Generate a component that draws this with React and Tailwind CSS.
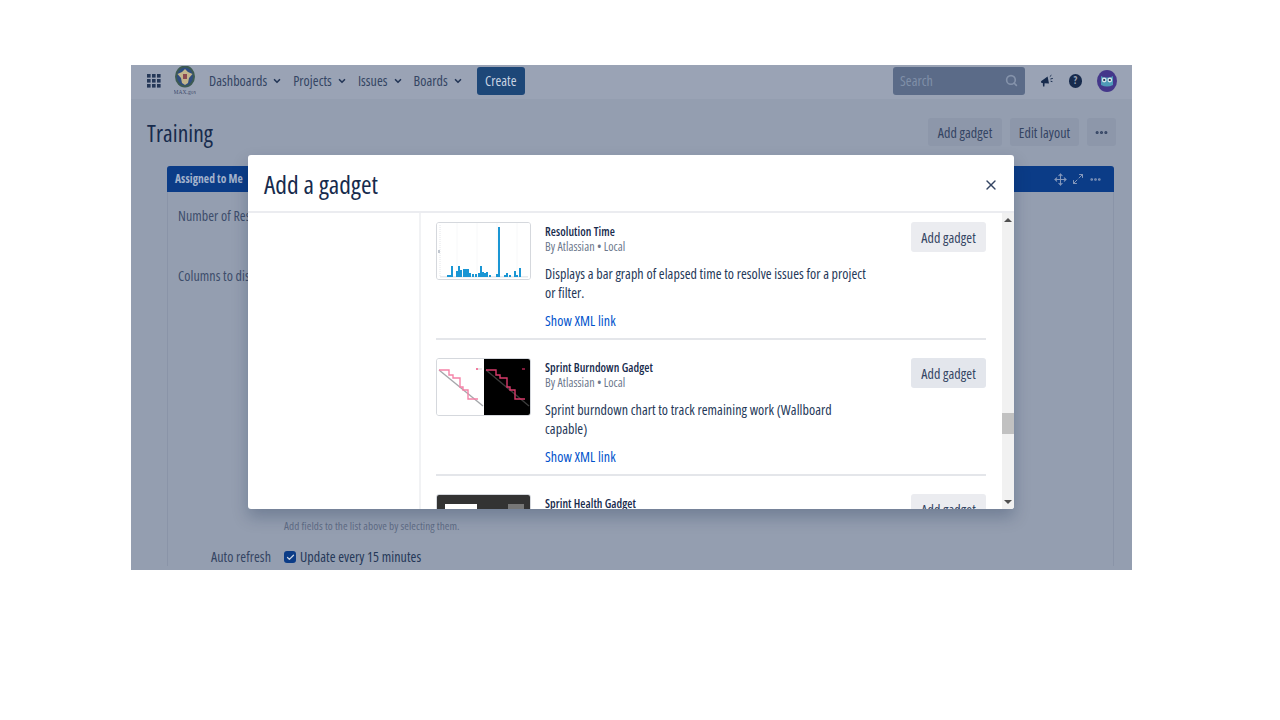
import React from 'react';
import { ChevronDown, Search, X, Move, Maximize2, MoreHorizontal, Check } from 'lucide-react';

const font = "font-['Open_Sans','Liberation_Sans',sans-serif] [font-stretch:77%] tracking-[0.06px]";

const GridIcon = () => (
  <svg width="14" height="14" viewBox="0 0 14 14" fill="#253858">
    {[0, 5, 10].map((y) =>
      [0, 5, 10].map((x) => <rect key={`${x}-${y}`} x={x} y={y} width="3.6" height="3.6" />)
    )}
  </svg>
);

const Seal = () => (
  <svg width="22" height="30" viewBox="0 0 22 30">
    <ellipse cx="11" cy="10.5" rx="10" ry="11" fill="#3d5a52" />
    <ellipse cx="11" cy="10.5" rx="8" ry="9" fill="#2f4d80" />
    <path d="M3.5 8 L8 6 L11 3 L14 6 L18.5 8 L15 12 L14 17 L11 19 L8 17 L7 12 Z" fill="#c3b58c" />
    <rect x="9" y="8" width="4" height="5" fill="#8c4a52" />
    <text x="11" y="28" textAnchor="middle" fontSize="5.5" fill="#3f4d6b" fontFamily="Liberation Serif, serif">MAX.gov</text>
  </svg>
);

const Megaphone = () => (
  <svg width="14" height="14" viewBox="0 0 14 14" fill="#172b4d">
    <path d="M1 7.2 L7.6 2.6 L9 9.6 L4.6 9.2 L4.4 12.6 L3 12.6 L2.8 9 L1.4 9 Z" />
    <path d="M9.8 2.6 L11.4 1.2 M10.4 5 L12.8 4.4 M10.6 7.2 L12.4 7.6" stroke="#172b4d" strokeWidth="1" />
  </svg>
);

const Owl = () => (
  <svg width="20" height="22" viewBox="0 0 20 22">
    <ellipse cx="10" cy="11" rx="10" ry="11" fill="#44378a" />
    <path d="M4 6 L7 7.5 H13 L16 6 V15 Q10 18 4 15 Z" fill="#4f9bb8" />
    <circle cx="7.2" cy="10" r="2.4" fill="#d5e3ea" />
    <circle cx="12.8" cy="10" r="2.4" fill="#d5e3ea" />
    <circle cx="7.2" cy="10" r="1.1" fill="#172b4d" />
    <circle cx="12.8" cy="10" r="1.1" fill="#172b4d" />
  </svg>
);

const NavItem = ({ label }) => (
  <div className="flex items-center gap-[5px] text-[14px] text-[#344563] whitespace-nowrap">
    {label}
    <ChevronDown size={10} strokeWidth={4} className="text-[#253858]" />
  </div>
);

const GreyButton = ({ children, className = '' }) => (
  <div className={`h-[28px] flex items-center justify-center rounded-[3px] bg-[#8d97aa] text-[14px] text-[#344463] whitespace-nowrap ${className}`}>
    {children}
  </div>
);

const ResolutionThumb = () => {
  const bars = [
    [10, 2], [12, 2], [14, 11], [19, 6], [21, 11], [23, 7], [26, 8], [28, 8], [30, 8], [32, 4], [35, 3], [38, 3],
    [41, 4], [43, 11], [45, 5], [47, 4], [49, 5], [52, 2], [59, 3], [61, 50], [67, 2], [69, 4], [72, 2], [77, 6], [79, 2], [82, 9],
  ];
  return (
    <svg width="93" height="56" viewBox="0 0 93 56" className="block">
      <rect width="93" height="56" fill="#fff" />
      <g stroke="#f7f8f9" strokeWidth="1">
        <path d="M20 0 V54 M40 0 V54 M60 0 V54 M80 0 V54" />
        <path d="M3 2 V54" strokeDasharray="1 1" stroke="#e4e6ea" />
      </g>
      <rect x="1" y="27" width="2" height="3" fill="#c1c7d0" />
      <rect x="3" y="53" width="88" height="1.5" fill="#e6e9ed" />
      {bars.map(([x, h]) => (
        <rect key={x} x={x} y={54 - h} width="2" height={h} fill="#1a96d4" />
      ))}
    </svg>
  );
};

const burndownPath = 'M2 11 H12 V16 H16 V19 H23 V28 H26 V31 H31 V40 H41';

const BurndownThumb = () => (
  <svg width="93" height="56" viewBox="0 0 93 56" className="block">
    <rect width="47" height="56" fill="#fff" />
    <rect x="47" width="46" height="56" fill="#000" />
    <path d="M2 11 L46 47" stroke="#a5a7ab" strokeWidth="1.4" />
    <path d={burndownPath} fill="none" stroke="#f583a8" strokeWidth="1.4" />
    <rect x="39" y="9" width="2" height="2" fill="#f27ca0" />
    <rect x="41" y="9.5" width="4" height="1" fill="#d0d0d0" />
    <path d="M49 11 L92 47" stroke="#3c3c3c" strokeWidth="1.4" />
    <path d={burndownPath} transform="translate(47 0)" fill="none" stroke="#d83b6b" strokeWidth="1.4" />
    <rect x="85" y="9" width="3" height="2" fill="#7c1a3a" />
  </svg>
);

const HealthThumb = () => (
  <svg width="93" height="56" viewBox="0 0 93 56" className="block">
    <rect width="93" height="56" fill="#333" />
    <rect x="8" y="9" width="32" height="12" fill="#fff" />
    <rect x="71" y="9" width="16" height="12" fill="#777" />
  </svg>
);

const Gadget = ({ name, desc, thumb, hover }) => (
  <div className={`flex pt-[9px] ${desc ? 'h-[127px] mb-[9px] border-b-2 border-[#e4e6ea]' : 'h-[60px]'}`}>
    <div className="w-[95px] h-[58px] shrink-0 rounded-[3px] border border-[#d5d8dd] overflow-hidden">{thumb}</div>
    <div className="ml-[14px] w-[340px]">
      <div className="text-[11.8px] font-semibold leading-[19px] text-[#172b4d]">{name}</div>
      {desc && (
        <>
          <div className="text-[12px] leading-[16px] mt-[-2px] text-[#6b778c]">By Atlassian • Local</div>
          <div className="mt-[9px] text-[14px] leading-[19px] text-[#253858]">{desc}</div>
          <div className="mt-[9px] text-[14px] leading-[19px] text-[#0052cc]">Show XML link</div>
        </>
      )}
    </div>
    <div className={`ml-auto h-[30px] w-[75px] flex items-center justify-center rounded-[3px] text-[14px] text-[#344563] whitespace-nowrap ${hover ? 'bg-[#e3e6ec]' : 'bg-[#ebecf0]'}`}>
      Add gadget
    </div>
  </div>
);

export default function App() {
  return (
    <div className={`${font} h-screen w-full bg-white pt-[65px] pl-[131px] overflow-hidden`}>
      <div className="relative w-[1001px] h-[505px] overflow-hidden bg-[#949eb0]">
        {/* top nav */}
        <div className="h-[34px] flex items-center bg-[#9aa3b5] pl-[16px] pr-[15px] pb-[3px]">
          <GridIcon />
          <div className="ml-[13px]"><Seal /></div>
          <div className="ml-[13px] flex items-center gap-[11px]">
            <NavItem label="Dashboards" />
            <NavItem label="Projects" />
            <NavItem label="Issues" />
            <NavItem label="Boards" />
          </div>
          <div className="ml-[14px] h-[28px] w-[48px] flex items-center justify-center rounded-[3px] bg-[#1d4778] text-[14px] text-[#c9d3e2]">
            Create
          </div>
          <div className="ml-auto h-[28px] w-[132px] flex items-center justify-between px-[7px] rounded-[3px] bg-[#5b6b88] text-[14px] text-[#8090a8]">
            Search
            <Search size={13} strokeWidth={3} className="text-[#8593ab]" />
          </div>
          <div className="ml-[15px]"><Megaphone /></div>
          <div className="ml-[15px] w-[13px] h-[14px] rounded-full bg-[#172b4d] flex items-center justify-center text-[10px] font-bold text-[#9aa3b5]">?</div>
          <div className="ml-[15px]"><Owl /></div>
        </div>

        {/* dashboard header */}
        <div className="flex items-start h-[53px] pl-[16px] pr-[16px] pt-[19px] bg-[#949eb0]">
          <div className="text-[23.5px] leading-[30px] text-[#172b4d]">Training</div>
          <div className="ml-auto flex gap-[8px]">
            <GreyButton className="w-[74px]">Add gadget</GreyButton>
            <GreyButton className="w-[69px]">Edit layout</GreyButton>
            <GreyButton className="w-[29px]"><MoreHorizontal size={15} strokeWidth={3} /></GreyButton>
          </div>
        </div>

        {/* gadget config card behind the dialog */}
        <div className="ml-[36px] mt-[14px] h-[400px] w-[947px] rounded-t-[3px] border-x border-[#8a94a8]">
          <div className="h-[26px] -mx-px rounded-t-[3px] bg-[#0b3c87] flex items-center justify-between pl-[8px] pr-[12px] text-[#8598bb]">
            <span className="text-[11.5px] font-bold text-[#a3b3cc]">Assigned to Me</span>
            <span className="flex items-center gap-[5px]">
              <Move size={13} strokeWidth={2} />
              <Maximize2 size={12} strokeWidth={2} />
              <MoreHorizontal size={13} strokeWidth={3} />
            </span>
          </div>
          <div className="pl-[10px] pt-[15px] text-[14px] leading-[18px] text-[#3d4d6b]">
            <div>Number of Results</div>
            <div className="mt-[42px]">Columns to display</div>
          </div>
          <div className="pl-[116px] mt-[234px] text-[11.2px] leading-[14px] text-[#5f6c85]">Add fields to the list above by selecting them.</div>
          <div className="flex items-center mt-[15px] pl-[43px] text-[14px] leading-[18px] text-[#344563] whitespace-nowrap">
            <span className="w-[73px]">Auto refresh</span>
            <span className="w-[12px] h-[12px] rounded-[3px] bg-[#0b3c87] flex items-center justify-center">
              <Check size={9} strokeWidth={3.5} className="text-[#c9d3e2]" />
            </span>
            <span className="ml-[4px] text-[#253858]">Update every 15 minutes</span>
          </div>
        </div>

        {/* dialog */}
        <div className="absolute left-[117px] top-[90px] w-[766px] h-[354px] rounded-[3px] bg-white shadow-[0_8px_16px_rgba(9,30,66,0.25)] overflow-hidden flex flex-col">
          <div className="h-[58px] flex items-center justify-between pl-[16px] pr-[15px] pt-[3px] border-b-2 border-[#ebecf0]">
            <div className="text-[25.5px] text-[#172b4d]">Add a gadget</div>
            <X size={16} strokeWidth={2} className="text-[#344563]" />
          </div>
          <div className="flex-1 min-h-0 flex">
            <div className="w-[173px] border-r-2 border-[#f1f2f4]" />
            <div className="flex-1 min-h-0 overflow-hidden pl-[15px] pr-[16px]">
              <Gadget
                name="Resolution Time"
                thumb={<ResolutionThumb />}
                desc={<>Displays a bar graph of elapsed time to resolve issues for a project<br />or filter.</>}
              />
              <Gadget
                name="Sprint Burndown Gadget"
                thumb={<BurndownThumb />}
                hover
                desc={<>Sprint burndown chart to track remaining work (Wallboard<br />capable)</>}
              />
              <Gadget name="Sprint Health Gadget" thumb={<HealthThumb />} />
            </div>
            <div className="w-[12px] bg-[#f1f1f1] flex flex-col items-center justify-between py-[5px] relative">
              <span className="w-0 h-0 border-x-[4px] border-x-transparent border-b-[4px] border-b-[#505050]" />
              <span className="absolute left-0 top-[200px] w-[12px] h-[21px] bg-[#c1c1c1]" />
              <span className="w-0 h-0 border-x-[4px] border-x-transparent border-t-[4px] border-t-[#505050]" />
            </div>
          </div>
        </div>
      </div>
    </div>
  );
}
